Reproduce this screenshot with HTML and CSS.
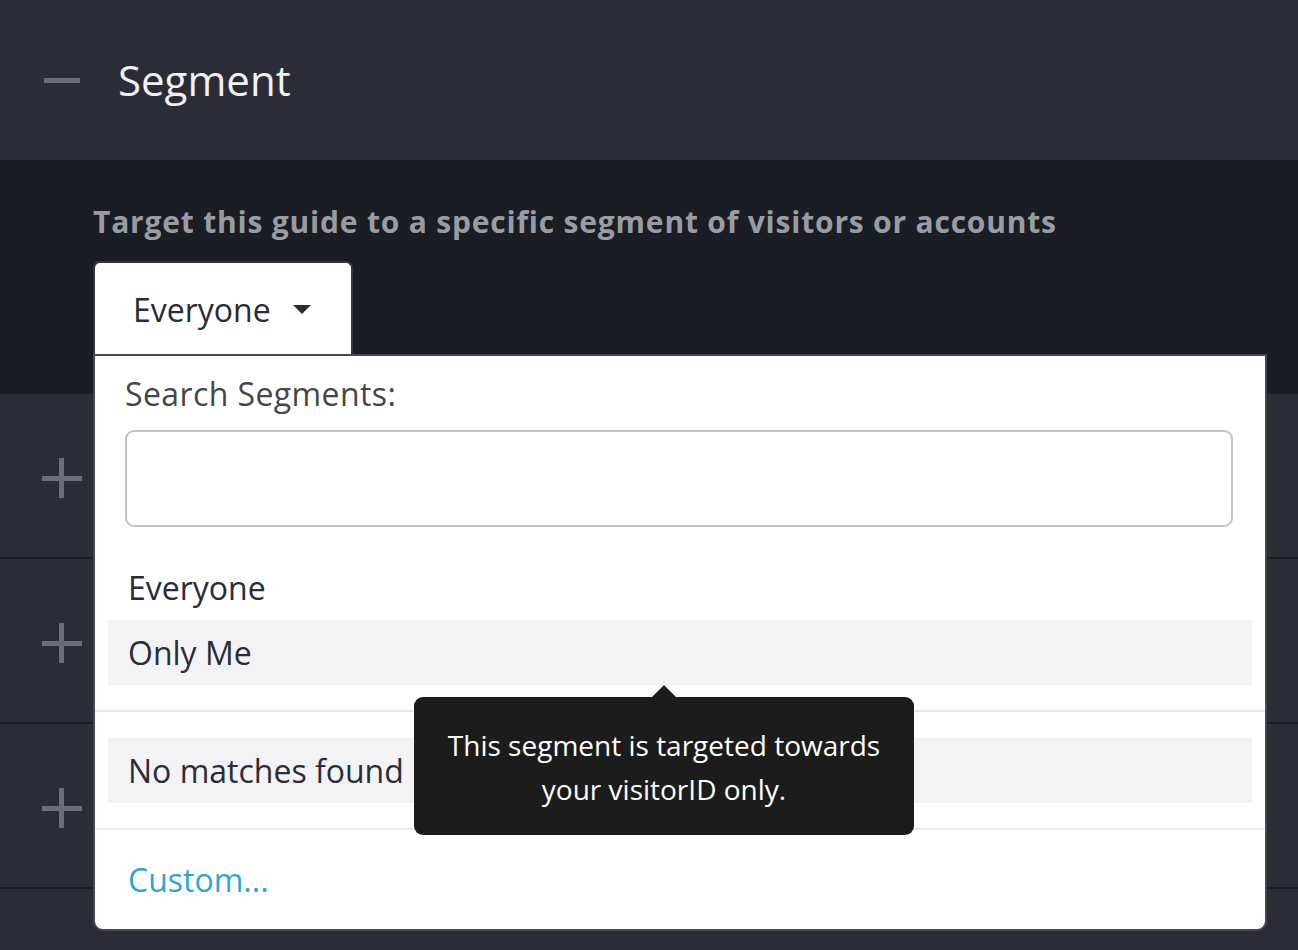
FILE: index.html
```html
<!DOCTYPE html>
<html lang="en">
<head>
    <meta charset="UTF-8">
    <meta name="viewport" content="width=device-width, initial-scale=1.0">
    <title>Segment</title>
    <link rel="stylesheet" href="styles.css">
</head>
<body>
    <!-- Section header -->
    <div class="section-header">
        <span class="collapse-icon"></span>
        <h1>Segment</h1>
    </div>

    <div class="target-panel">
        <h2>Target this guide to a specific segment of visitors or accounts</h2>

        <div class="segment-select">
            <button type="button" class="select-button">
                Everyone
                <span class="caret"></span>
            </button>

            <!-- Open dropdown -->
            <div class="dropdown">
                <div class="dropdown-search">
                    <label for="segmentSearch">Search Segments:</label>
                    <input type="text" id="segmentSearch">
                </div>

                <ul class="dropdown-list">
                    <li>Everyone</li>
                    <li class="active">Only Me</li>
                </ul>

                <ul class="dropdown-list empty">
                    <li class="active">No matches found</li>
                </ul>

                <div class="dropdown-footer">
                    <a href="#">Custom...</a>
                </div>

                <div class="tooltip">This segment is targeted towards your visitorID only.</div>
            </div>
        </div>
    </div>

    <!-- Collapsed sections behind the dropdown -->
    <div class="collapsed-row"><span class="expand-icon"></span></div>
    <div class="collapsed-row"><span class="expand-icon"></span></div>
    <div class="collapsed-row"><span class="expand-icon"></span></div>
    <div class="collapsed-row last"></div>
</body>
</html>
```

FILE: styles.css
```css
body {
    margin: 0;
    padding: 0;
    background-color: #2a2d37;
    font-family: "Open Sans", Lato, sans-serif;
    color: #2a2d37;
}

.section-header {
    height: 158px;
    display: flex;
    align-items: center;
    padding: 0 0 2px 44px;
    background-color: #2a2d37;
}

.collapse-icon {
    width: 36px;
    height: 5px;
    margin-top: 2px;
    background-color: #6b6e77;
    margin-right: 38px;
}

.section-header h1 {
    margin: 0;
    font-size: 42px;
    font-weight: 400;
    color: #f1f1f3;
}

.target-panel {
    height: 234px;
    box-sizing: border-box;
    padding: 44px 93px 0;
    background-color: #1b1d25;
}

.target-panel h2 {
    margin: 0 0 21px;
    font-size: 30px;
    line-height: 36px;
    font-weight: 700;
    letter-spacing: 0.8px;
    color: #9a9ca4;
}

.segment-select {
    position: relative;
}

.select-button {
    display: flex;
    align-items: center;
    width: 260px;
    height: 95px;
    padding: 0 0 0 38px;
    background: #fff;
    border: 2px solid #343741;
    border-bottom: none;
    border-radius: 7px 7px 0 0;
    font-family: inherit;
    font-size: 32px;
    color: #2a2d37;
    cursor: pointer;
}

.caret {
    margin-left: 22px;
    border-left: 9px solid transparent;
    border-right: 9px solid transparent;
    border-top: 9px solid #2a2d37;
}

.dropdown {
    position: absolute;
    top: 93px;
    left: 0;
    width: 1174px;
    box-sizing: border-box;
    background: #fff;
    border: 2px solid #454852;
    border-radius: 0 0 10px 10px;
    z-index: 10;
}

.dropdown-search {
    padding: 18px 32px 0 30px;
}

.dropdown-search label {
    display: block;
    margin-bottom: 16px;
    font-size: 32px;
    line-height: 40px;
    letter-spacing: 0.4px;
    color: #45464b;
}

.dropdown-search input {
    display: block;
    width: 100%;
    height: 97px;
    box-sizing: border-box;
    border: 2px solid #c2c3ca;
    border-radius: 9px;
}

.dropdown-list {
    list-style: none;
    margin: 0;
    padding: 28px 13px 25px;
    border-bottom: 2px solid #e9e9ed;
}

.dropdown-list li {
    height: 65px;
    padding-left: 20px;
    display: flex;
    align-items: center;
    font-size: 32px;
    color: #2a2d37;
}

.dropdown-list li.active {
    background-color: #f3f3f5;
}

.dropdown-list.empty {
    padding-top: 26px;
}

.dropdown-footer {
    padding: 30px 33px 29px;
    font-size: 32px;
    line-height: 40px;
}

.dropdown-footer a {
    color: #2fa6d1;
    text-decoration: none;
}

.tooltip {
    position: absolute;
    top: 341px;
    left: 319px;
    width: 500px;
    box-sizing: border-box;
    padding: 26px 30px 24px;
    background: #1c1c1c;
    border-radius: 9px;
    color: #fff;
    font-size: 28px;
    line-height: 44px;
    text-align: center;
}

.tooltip::before {
    content: "";
    position: absolute;
    top: -12px;
    left: 238px;
    border-left: 12px solid transparent;
    border-right: 12px solid transparent;
    border-bottom: 12px solid #1c1c1c;
}

.collapsed-row {
    height: 158px;
    display: flex;
    align-items: center;
    padding: 5px 0 0 42px;
    border-bottom: 2px solid #1b1d25;
}

.collapsed-row.last {
    height: 61px;
    padding: 0;
    border-bottom: none;
}

.expand-icon {
    position: relative;
    width: 40px;
    height: 40px;
}

.expand-icon::before,
.expand-icon::after {
    content: "";
    position: absolute;
    background-color: #6b6e77;
}

.expand-icon::before {
    left: 0;
    top: 18px;
    width: 40px;
    height: 5px;
}

.expand-icon::after {
    left: 17px;
    top: 0;
    width: 5px;
    height: 40px;
}
```
